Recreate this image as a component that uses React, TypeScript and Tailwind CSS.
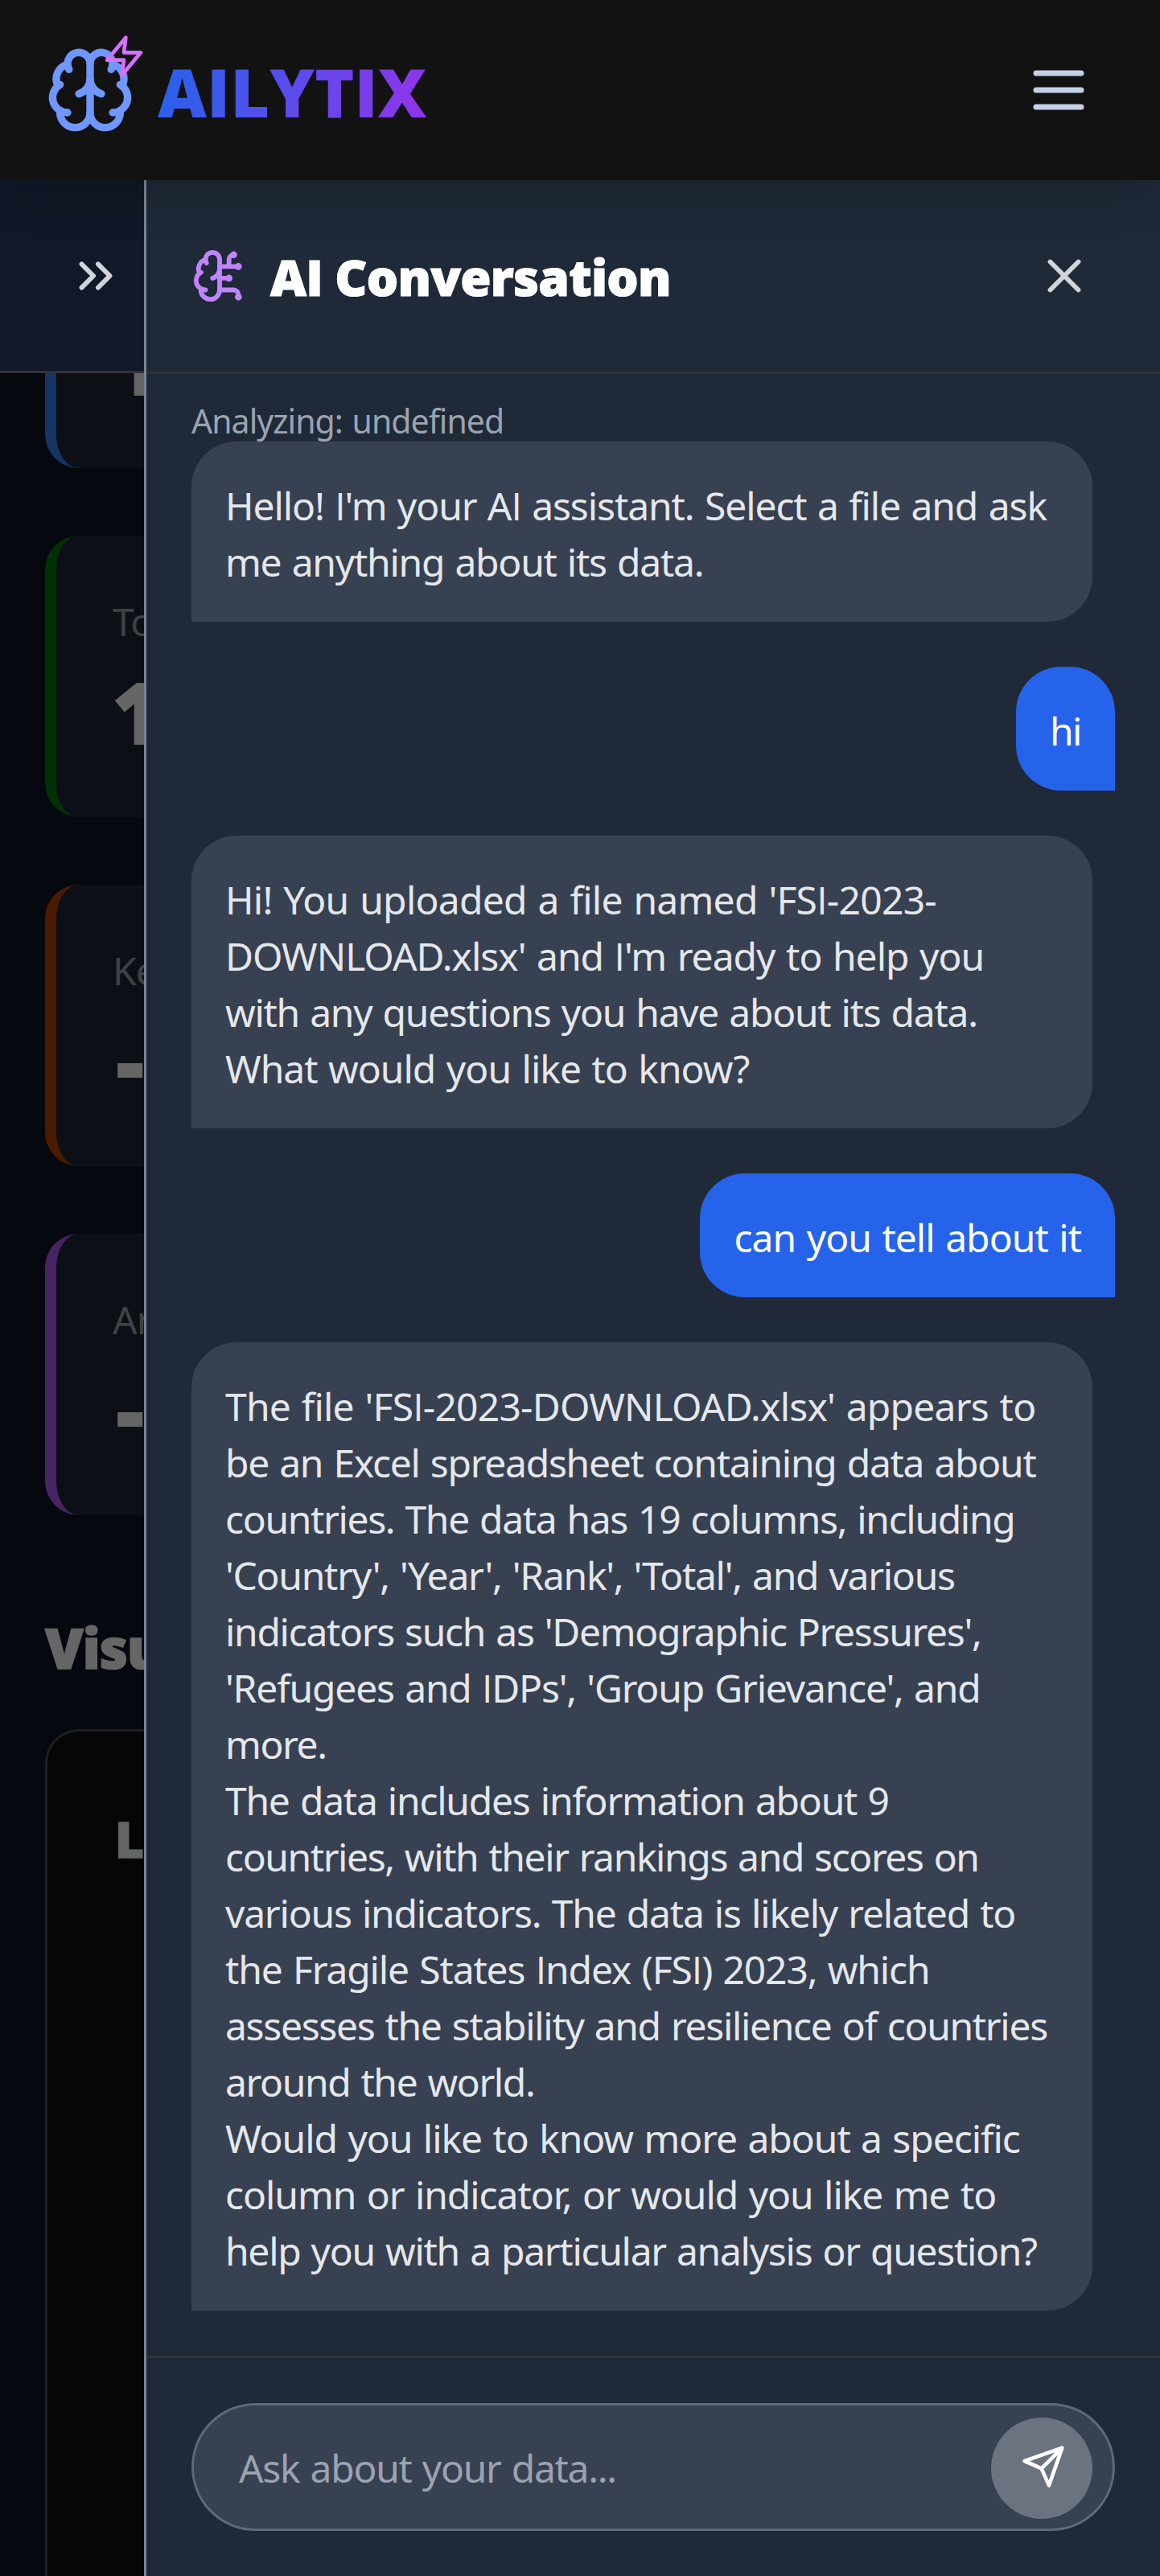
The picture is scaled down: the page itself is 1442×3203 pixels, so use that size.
import { ReactNode } from 'react';
import { Brain, BrainCircuit, ChevronsRight, X } from 'lucide-react';

// Each line carries its own letter spacing in pixels.
type Line = [text: string, tracking: number];
type Message = { from: 'ai' | 'user'; lines: Line[] };

const messages: Message[] = [
  {
    from: 'ai',
    lines: [
      ["Hello! I'm your AI assistant. Select a file and ask", -1.1],
      ['me anything about its data.', -1.26],
    ],
  },
  { from: 'user', lines: [['hi', -1.5]] },
  {
    from: 'ai',
    lines: [
      ["Hi! You uploaded a file named 'FSI-2023-", -0.76],
      ["DOWNLOAD.xlsx' and I'm ready to help you", -1.0],
      ['with any questions you have about its data.', -1.29],
      ['What would you like to know?', -1.0],
    ],
  },
  { from: 'user', lines: [['can you tell about it', -0.98]] },
  {
    from: 'ai',
    lines: [
      ["The file 'FSI-2023-DOWNLOAD.xlsx' appears to", -0.8],
      ['be an Excel spreadsheet containing data about', -1.29],
      ['countries. The data has 19 columns, including', -1.35],
      ["'Country', 'Year', 'Rank', 'Total', and various", -1.28],
      ["indicators such as 'Demographic Pressures',", -1.32],
      ["'Refugees and IDPs', 'Group Grievance', and", -1.19],
      ['more.', -1.4],
      ['The data includes information about 9', -1.25],
      ['countries, with their rankings and scores on', -1.41],
      ['various indicators. The data is likely related to', -1.22],
      ['the Fragile States Index (FSI) 2023, which', -1.15],
      ['assesses the stability and resilience of countries', -1.33],
      ['around the world.', -1.39],
      ['Would you like to know more about a specific', -1.06],
      ['column or indicator, or would you like me to', -1.06],
      ['help you with a particular analysis or question?', -1.3],
    ],
  },
];

function Bolt() {
  return (
    <svg viewBox="0 0 24 24" className="absolute -top-[14px] -right-[14px] size-[56px] fill-none stroke-[#d670ff] stroke-2" strokeLinejoin="round" strokeLinecap="round">
      <path d="M13 2 3 14h9l-1 8 10-12h-9l1-8z" />
    </svg>
  );
}

function TopBar() {
  return (
    <header className="relative z-20 flex h-[224px] shrink-0 items-center justify-between bg-[#121212] pr-[84px] pl-[56px] shadow-[0_35px_52px_-10px_rgba(0,0,0,0.1),0_14px_21px_-14px_rgba(0,0,0,0.1)]">
      <div className="flex items-center gap-[28px]">
        <div className="relative">
          <Brain className="size-[112px] text-[#7096ff]" />
          <Bolt />
        </div>
        <span className="bg-[linear-gradient(100deg,#2563eb,#9333ea)] bg-clip-text pt-[3px] font-['Open_Sans',sans-serif] text-[84px] leading-[112px] font-extrabold text-transparent">AILYTIX</span>
      </div>
      <svg viewBox="0 0 24 24" className="size-[84px] fill-none stroke-[#c5d0e6] stroke-2" strokeLinecap="round">
        <path d="M4 6h16M4 12h16M4 18h16" />
      </svg>
    </header>
  );
}

function StatCard({ accent, label, value }: { accent: string; label: string; value: string }) {
  const inset = value === '-' ? 'pl-[5px]' : 'pl-0';
  return (
    <div className={`h-[350px] w-[500px] shrink-0 rounded-[42px] border-l-[14px] bg-[#0c0f16] p-[70px] pt-[72px] whitespace-nowrap ${accent}`}>
      <p className="text-[48px] leading-[70px] tracking-[-1px] text-[#404143]">{label}</p>
      <p className={`mt-[14px] font-['Open_Sans',sans-serif] text-[105px] leading-[126px] font-extrabold text-[#666] [-webkit-text-stroke:2px_#666] ${inset}`}>{value}</p>
    </div>
  );
}

function Dashboard() {
  return (
    <div className="flex w-[179px] shrink-0 flex-col overflow-hidden bg-[#05080f]">
      <div className="z-10 flex h-[240px] shrink-0 items-center border-b-[3px] border-[#303338] bg-[#111827] pl-[84px]">
        <ChevronsRight className="size-[70px] shrink-0 text-[#d1d5db]" />
      </div>
      <div className="-mt-[232px] flex flex-col gap-[84px] pl-[56px]">
        <StatCard accent="border-[#183462]" label="Total Rows" value="19" />
        <StatCard accent="border-[#012f06]" label="Total Columns" value="19" />
        <StatCard accent="border-[#4b1b00]" label="Key Metric" value="-" />
        <StatCard accent="border-[#482463]" label="Analysis" value="-" />
      </div>
      <h2 className="mt-[115px] pl-[56px] font-['Open_Sans',sans-serif] text-[69px] leading-[98px] font-extrabold tracking-[-1.4px] text-[#666] [-webkit-text-stroke:1.5px_#666]">Visualizations</h2>
      <div className="mt-[53px] ml-[56px] w-[500px] flex-1 rounded-t-[42px] border-[3px] border-b-0 border-[#1f1f1f] bg-[#060606] p-[84px]">
        <h3 className="font-['Open_Sans',sans-serif] text-[62px] leading-[98px] font-extrabold tracking-[-1.4px] whitespace-nowrap text-[#626666] [-webkit-text-stroke:1.5px_#626666]">Line Chart</h3>
      </div>
    </div>
  );
}

function plainI(text: string): ReactNode[] {
  return text.split(/(I)/).map((part, i) =>
    part === 'I' ? (
      <span key={i} className="font-['Open_Sans',sans-serif] leading-none">
        I
      </span>
    ) : (
      part
    ),
  );
}

function Bubble({ from, lines }: Message) {
  const tone = from === 'ai' ? 'w-[1120px] rounded-bl-none bg-[#374151] text-[#e5e7eb]' : 'self-end rounded-br-none bg-[#2563eb] text-white';
  return (
    <div className={`rounded-[56px] px-[42px] pt-[45px] pb-[39px] text-[48px] leading-[70px] whitespace-pre [word-spacing:2px] ${tone}`}>
      {lines.map(([text, tracking]) => (
        <p key={text} className="h-[70px]" style={{ letterSpacing: tracking }}>
          {plainI(text)}
        </p>
      ))}
    </div>
  );
}

function ChatPanel() {
  return (
    <section className="flex min-w-0 flex-1 flex-col border-l-[3px] border-[#7a8494] bg-[#1f2937]">
      <div className="flex h-[241px] shrink-0 items-center justify-between border-b-[3px] border-[#303338] pr-[84px] pl-[56px]">
        <div className="flex items-center gap-[28px]">
          <BrainCircuit className="size-[70px] text-[#c084fc]" />
          <h1 className="pt-[2px] font-['Open_Sans',sans-serif] text-[62px] leading-[98px] font-extrabold tracking-[-0.8px] text-white [-webkit-text-stroke:1.2px_white]">AI Conversation</h1>
        </div>
        <X className="size-[70px] text-[#d1d5db]" />
      </div>
      <div className="flex flex-1 flex-col px-[56px] pt-[28px]">
        <p className="h-[56px] pt-[2px] text-[41px] leading-[56px] tracking-[-0.96px] text-[#9ca3af] [word-spacing:2px]">Analyzing: undefined</p>
        <div className="flex flex-col gap-[56px]">
          {messages.map((m, i) => (
            <Bubble key={i} {...m} />
          ))}
        </div>
      </div>
      <div className="h-[274px] shrink-0 border-t-[3px] border-[#303338] px-[56px] pt-[56px]">
        <div className="flex h-[159px] items-center justify-between rounded-full border-[3px] border-[#626976] bg-[#374151] pr-[25px] pl-[56px]">
          <span className="pt-[3px] text-[48px] leading-[70px] tracking-[-1.3px] text-[#9ca3af] [word-spacing:2px]">Ask about your data...</span>
          <button className="mt-[2px] flex size-[126px] items-center justify-center rounded-full bg-[#6b7280] pb-[3px] pl-[3px]">
            <svg viewBox="0 0 24 24" className="size-[56px] fill-none stroke-white stroke-2" strokeLinecap="round" strokeLinejoin="round">
              <path d="M22 2 11 13M22 2l-7 20-4-9-9-4 20-7z" />
            </svg>
          </button>
        </div>
      </div>
    </section>
  );
}

export default function App() {
  return (
    <div className="flex h-[3203px] w-[1442px] flex-col overflow-hidden bg-[#05080f] font-['Noto_Sans',sans-serif]">
      <TopBar />
      <main className="flex min-h-0 flex-1">
        <Dashboard />
        <ChatPanel />
      </main>
    </div>
  );
}
